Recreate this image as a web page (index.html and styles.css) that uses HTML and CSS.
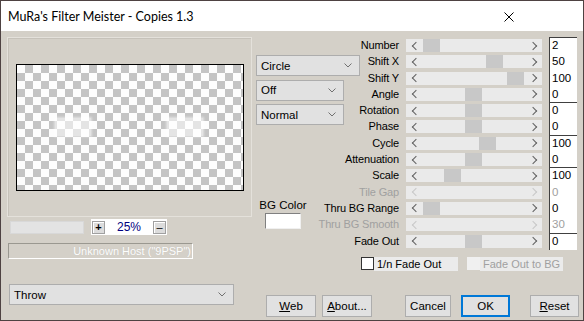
FILE: index.html
```html
<!DOCTYPE html>
<html>
<head>
<meta charset="utf-8">
<link rel="stylesheet" href="styles.css">
</head>
<body>
<div class="window">
  <div class="titlebar">
    <span class="title">MuRa's Filter Meister - Copies 1.3</span>
    <svg class="close" width="10" height="10" viewBox="0 0 10 10"><path d="M0.5 0.5 L9.5 9.5 M9.5 0.5 L0.5 9.5" stroke="#000" stroke-width="1" fill="none"/></svg>
  </div>
  <div class="client">
    <div class="left">
      <div class="group">
        <div class="preview">
          <div class="blob b1"></div>
          <div class="blob b2"></div>
        </div>
      </div>
      <div class="zoomrow">
        <div class="zfield"></div>
        <div class="zbox">
          <span class="zbtn">+</span>
          <span class="zval">25%</span>
          <span class="zbtn minus">&#8211;</span>
        </div>
      </div>
      <div class="status">Unknown Host ("9PSP")</div>
      <div class="combo throw"><span>Throw</span><svg class="chev" width="8" height="5" viewBox="0 0 8 5"><path d="M0.5 0.5 L4 4 L7.5 0.5" stroke="#707070" fill="none"/></svg></div>
    </div>
    <div class="right">
      <div class="params">
        <div class="rows">
          <div class="prow"><div class="lbl">Number</div><div class="sb"><i class="ar l"></i><div class="trough"><b class="thumb" style="margin-left:0px"></b></div><i class="ar r"></i></div><div class="val first">2</div></div>
          <div class="prow"><div class="lbl">Shift X</div><div class="sb"><i class="ar l"></i><div class="trough"><b class="thumb" style="margin-left:63px"></b></div><i class="ar r"></i></div><div class="val">50</div></div>
          <div class="prow"><div class="lbl">Shift Y</div><div class="sb"><i class="ar l"></i><div class="trough"><b class="thumb" style="margin-left:84px"></b></div><i class="ar r"></i></div><div class="val">100</div></div>
          <div class="prow"><div class="lbl">Angle</div><div class="sb"><i class="ar l"></i><div class="trough"><b class="thumb" style="margin-left:42px"></b></div><i class="ar r"></i></div><div class="val">0</div></div>
          <div class="prow"><div class="lbl">Rotation</div><div class="sb"><i class="ar l"></i><div class="trough"><b class="thumb" style="margin-left:42px"></b></div><i class="ar r"></i></div><div class="val first">0</div></div>
          <div class="prow"><div class="lbl">Phase</div><div class="sb"><i class="ar l"></i><div class="trough"><b class="thumb" style="margin-left:42px"></b></div><i class="ar r"></i></div><div class="val">0</div></div>
          <div class="prow"><div class="lbl">Cycle</div><div class="sb"><i class="ar l"></i><div class="trough"><b class="thumb" style="margin-left:56px"></b></div><i class="ar r"></i></div><div class="val first">100</div></div>
          <div class="prow"><div class="lbl">Attenuation</div><div class="sb"><i class="ar l"></i><div class="trough"><b class="thumb" style="margin-left:42px"></b></div><i class="ar r"></i></div><div class="val">0</div></div>
          <div class="prow"><div class="lbl">Scale</div><div class="sb"><i class="ar l"></i><div class="trough"><b class="thumb" style="margin-left:21px"></b></div><i class="ar r"></i></div><div class="val first">100</div></div>
          <div class="prow dis"><div class="lbl">Tile Gap</div><div class="sb"><i class="ar l"></i><div class="trough"></div><i class="ar r"></i></div><div class="val">0</div></div>
          <div class="prow"><div class="lbl">Thru BG Range</div><div class="sb"><i class="ar l"></i><div class="trough"><b class="thumb" style="margin-left:0px"></b></div><i class="ar r"></i></div><div class="val">0</div></div>
          <div class="prow dis"><div class="lbl">Thru BG Smooth</div><div class="sb"><i class="ar l"></i><div class="trough"></div><i class="ar r"></i></div><div class="val">30</div></div>
          <div class="prow"><div class="lbl">Fade Out</div><div class="sb"><i class="ar l"></i><div class="trough"><b class="thumb" style="margin-left:42px"></b></div><i class="ar r"></i></div><div class="val first last">0</div></div>
        </div>
        <div class="combos">
          <div class="combo c1"><span>Circle</span><svg class="chev" width="8" height="5" viewBox="0 0 8 5"><path d="M0.5 0.5 L4 4 L7.5 0.5" stroke="#707070" fill="none"/></svg></div>
          <div class="combo c2"><span>Off</span><svg class="chev" width="8" height="5" viewBox="0 0 8 5"><path d="M0.5 0.5 L4 4 L7.5 0.5" stroke="#707070" fill="none"/></svg></div>
          <div class="combo c2"><span>Normal</span><svg class="chev" width="8" height="5" viewBox="0 0 8 5"><path d="M0.5 0.5 L4 4 L7.5 0.5" stroke="#707070" fill="none"/></svg></div>
        </div>
        <div class="bgcolor">
          <span>BG Color</span>
          <div class="swatch"></div>
        </div>
      </div>

      <div class="checks">
        <div class="chk"><span class="box"></span><span class="clabel">1/n Fade Out</span></div>
        <div class="chk dis"><span class="box"></span><span class="clabel">Fade Out to BG</span></div>
      </div>

      <div class="buttons">
        <div class="btn web"><u>W</u>eb</div>
        <div class="btn about"><u>A</u>bout...</div>
        <div class="btn cancel">Cancel</div>
        <div class="btn ok">OK</div>
        <div class="btn reset"><u>R</u>eset</div>
      </div>
    </div>
  </div>
</div>
</body>
</html>
```

FILE: styles.css
```css
* { box-sizing: border-box; }
html, body { margin: 0; padding: 0; }
body {
  width: 584px;
  height: 321px;
  overflow: hidden;
  font-family: "Liberation Sans", Arial, sans-serif;
  font-size: 11px;
  color: #000;
}
.window {
  width: 584px;
  height: 321px;
  border: 1px solid #4e4242;
  display: flex;
  flex-direction: column;
  background: #d4d0c8;
}
.titlebar {
  height: 30px;
  background: #fff;
  display: flex;
  align-items: center;
  padding-left: 7px;
  flex: none;
}
.title {
  font-family: "Lato", "Noto Sans", sans-serif;
  font-size: 12.5px;
  color: #000;
  flex: 1;
}
.close { margin-right: 69px; margin-top: 1px; }

.client {
  flex: 1;
  display: flex;
}
.left {
  width: 251px;
  flex: none;
  display: flex;
  flex-direction: column;
  padding: 6px 0 0 6px;
}
.group {
  width: 245px;
  height: 180px;
  border: 1px solid #e4e1db;
  box-shadow: inset 1px 1px 0 #c6c2ba;
  padding: 26px 0 0 8px;
}
.preview {
  position: relative;
  width: 228px;
  height: 127px;
  border: 1px solid #000;
  background: repeating-conic-gradient(#c4c4c4 0 25%, #fdfdfd 0 50%) 0 0 / 16px 16px;
}
.blob {
  position: absolute;
  top: 53px;
  width: 36px;
  height: 18px;
  background: rgba(255,255,255,0.55);
  box-shadow: 0 0 2px 1px rgba(255,255,255,0.5);
}
.b1 { left: 38px; }
.b2 { left: 150px; }

.zoomrow {
  margin-top: 2px;
  display: flex;
  align-items: center;
  height: 16px;
}
.zfield {
  margin-left: 3px;
  width: 74px;
  height: 13px;
  background: #e3e3e3;
  border: 1px solid #d8d8d8;
}
.zbox {
  margin-left: 7px;
  width: 76px;
  height: 16px;
  background: #fff;
  display: flex;
  align-items: center;
  padding: 0 1px;
}
.zbtn {
  width: 13px;
  height: 13px;
  background: #dcdcdc;
  border: 1px solid #a0a0a0;
  box-shadow: inset 1px 1px 0 #fff;
  font-weight: bold;
  font-size: 11px;
  line-height: 11px;
  text-align: center;
  flex: none;
}
.zbtn.minus { font-weight: normal; }
.zval {
  flex: 1;
  text-align: center;
  color: #000080;
  font-size: 12px;
}
.status {
  margin: 8px 0 0 1px;
  width: 185px;
  height: 16px;
  border-top: 1px solid #9a9890;
  border-left: 1px solid #9a9890;
  border-right: 1px solid #fff;
  border-bottom: 1px solid #fff;
  color: #fdfdfd;
  text-shadow: 0 0 1px #c0beb8;
  font-size: 11px;
  line-height: 14px;
  text-align: right;
  padding-right: 1px;
  white-space: nowrap;
  overflow: hidden;
}
.combo {
  height: 21px;
  background: #e1e1e1;
  border: 1px solid #adadad;
  display: flex;
  align-items: center;
  padding: 0 7px 0 4px;
  font-size: 11.5px;
}
.combo span { flex: 1; }
.throw {
  margin: 25px 0 0 2px;
  width: 225px;
}

.right {
  flex: 1;
  display: flex;
  flex-direction: column;
}
.params {
  margin-top: 6px;
  display: grid;
}
.params > * { grid-area: 1 / 1; }
.rows {
  display: flex;
  flex-direction: column;
}
.prow {
  height: 16.3px;
  display: grid;
  grid-template-columns: 147px 136px 28px;
  column-gap: 7px;
}
.combos {
  align-self: start;
  justify-self: start;
  margin: 18px 0 0 4px;
  display: flex;
  flex-direction: column;
  gap: 3.5px;
}
.c1 { width: 104px; }
.c2 { width: 88px; }
.bgcolor {
  align-self: start;
  justify-self: start;
  margin: 162px 0 0 10px;
  width: 42px;
  display: flex;
  flex-direction: column;
  align-items: center;
  gap: 2px;
  font-size: 11.5px;
  white-space: nowrap;
}
.swatch {
  width: 36px;
  height: 16px;
  background: #fff;
  border-top: 1px solid #808080;
  border-left: 1px solid #808080;
  border-right: 1px solid #f0f0f0;
  border-bottom: 1px solid #f0f0f0;
}
.lbl {
  text-align: right;
  line-height: 16px;
  font-size: 11px;
  letter-spacing: -0.15px;
  white-space: nowrap;
}
.prow.dis .lbl, .prow.dis .val { color: #a0a0a0; }
.sb {
  height: 13px;
  margin-top: 2px;
  background: #eaeaea;
  display: flex;
}
.ar {
  width: 17px;
  flex: none;
  display: flex;
  align-items: center;
  justify-content: center;
  color: #606060;
}
.ar::before {
  content: "";
  width: 5px;
  height: 5px;
  border-left: 1.5px solid currentColor;
  border-bottom: 1.5px solid currentColor;
}
.ar.l::before { transform: rotate(45deg); margin-left: 2px; }
.ar.r::before { transform: rotate(-135deg); margin-right: 2px; }
.prow.dis .ar { color: #c8c8c8; }
.trough { flex: 1; display: flex; }
.thumb {
  width: 17px;
  height: 13px;
  background: #c8c8c8;
  flex: none;
}
.val {
  background: #fff;
  border-left: 1px solid #404040;
  padding-left: 2px;
  font-size: 11.5px;
  line-height: 16px;
}
.val.first { border-top: 1px solid #404040; line-height: 15px; }
.val.last { height: 17px; }

.checks {
  margin: 8px 0 0 109px;
  display: flex;
  height: 14px;
}
.chk { display: flex; }
.chk + .chk { margin-left: 9px; }
.box {
  width: 13px;
  height: 13px;
  background: #fff;
  border: 1px solid #333;
  flex: none;
}
.clabel {
  background: #ebebeb;
  height: 14px;
  line-height: 14px;
  padding-left: 3px;
  font-size: 11px;
  white-space: nowrap;
}
.chk:first-child .clabel { width: 84px; }
.chk.dis .clabel { width: 83px; color: #a0a0a0; }
.chk.dis .box { background: #f0f0f0; border-color: #f0f0f0; }

.buttons {
  margin: 24px 0 0 14px;
  display: flex;
}
.btn {
  height: 22px;
  background: #e1e1e1;
  border: 1px solid #adadad;
  display: flex;
  align-items: center;
  justify-content: center;
  font-size: 11.5px;
}
.web { width: 50px; }
.about { width: 50px; margin-left: 6px; }
.cancel { width: 46px; margin-left: 33px; }
.ok { width: 49px; margin-left: 10px; border: 2px solid #0078d7; }
.reset { width: 49px; margin-left: 20px; }
```
